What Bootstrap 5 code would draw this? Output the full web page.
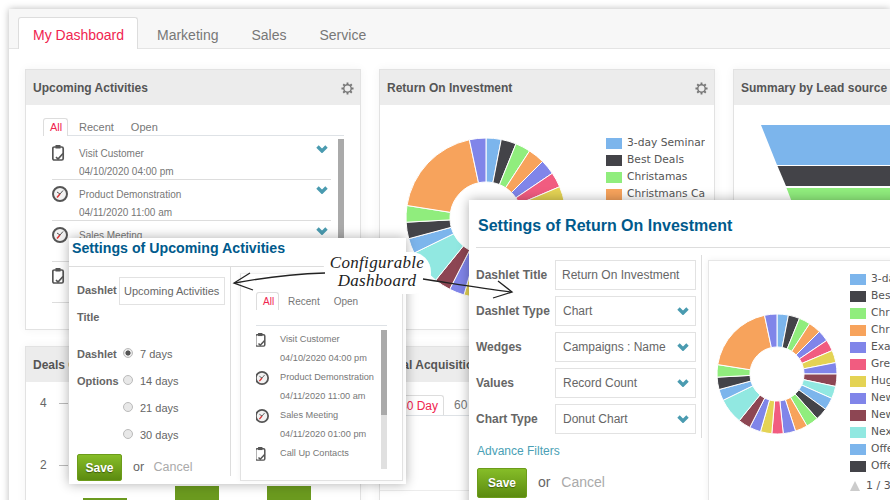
<!DOCTYPE html>
<html lang="en">
<head>
    <meta charset="UTF-8">
    <meta name="viewport" content="width=device-width, initial-scale=1.0">
    <title>Dashboard</title>
    <link href="https://cdn.jsdelivr.net/npm/bootstrap@5.3.1/dist/css/bootstrap.min.css" rel="stylesheet">
    <script src="https://cdn.jsdelivr.net/npm/bootstrap@5.3.1/dist/js/bootstrap.bundle.min.js"></script>
    <style>
        html, body { height: 500px; overflow: hidden; background: #fff; }
        body { position: relative; font-family: "Liberation Sans", Arial, sans-serif; color: #666; }

        .frame { margin: 9px 0 0 9px; height: 500px; overflow: hidden; background: #fff; box-shadow: 0 0 7px rgba(0,0,0,.28); }
        .top-tabs { height: 40px; padding: 8px 0 0 9px; background: #f7f7f7; border-bottom: 1px solid #e4e4e4; }
        .top-tabs .nav-link { height: 32px; padding: 0 19px 0 0; margin-left: 0; font-size: 14px; line-height: 36px; color: #777; border: 0; border-radius: 0; background: none; }
        .top-tabs .nav-link.active { width: 120px; padding: 0 0 0 14px; margin-right: 19px; color: #f0244f; background: #fff; border: 1px solid #ddd; border-bottom: 0; border-radius: 3px 3px 0 0; line-height: 35px; }
        .top-tabs .nav-item:nth-child(2) .nav-link { padding-right: 33px; }
        .top-tabs .nav-item:nth-child(3) .nav-link { padding-right: 33px; }

        .dash-grid { display: grid; grid-template-columns: repeat(3, 336px); grid-template-rows: 261px 300px; gap: 16px 18px; padding: 20px 0 0 16px; width: 1100px; }
        .dashlet { border: 1px solid #e2e2e2; border-radius: 0; box-shadow: 0 0 9px rgba(0,0,0,.05); overflow: hidden; }
        .dashlet .card-header { height: 35px; padding: 0 7px; font-size: 12px; font-weight: 700; line-height: 36px; color: #555; background: #ececec; border: 0; border-radius: 0; white-space: nowrap; }
        .dashlet .card-body { padding: 13px 16px 0 17px; }
        .gear { margin: 12px -1px 0 0; }

        .mini-tabs { font-size: 11px; }
        .mini-tabs .nav-link { padding: 0 0 0 11px; margin-right: 6px; line-height: 19px; color: #777; border: 0; background: none; }
        .mini-tabs .nav-link.active { width: 25px; padding: 0 0 0 6px; margin-right: 0; color: #f0244f; background: #fff; border: 1px solid #ddd; border-bottom: 0; border-radius: 3px 3px 0 0; line-height: 17px; height: 18px; }
        .act-tabs { height: 18px; }
        .act-wrap { height: 180px; margin-top: 3px; }
        .act-list { flex: 1; font-size: 10px; color: #777; margin: 0 7px 0 9px; }
        .act-item { position: relative; height: 41px; padding: 5px 0 0 27px; border-bottom: 1px solid #ddd; }
        .act-item .name { line-height: 19px; }
        .act-item .when { line-height: 15px; margin-top: 1px; }
        .act-icon { position: absolute; left: 0; top: 6px; width: 16px; height: 16px; }
        .act-chev { position: absolute; right: 3px; top: 6px; width: 12px; height: 8px; }
        .scroll-y { width: 6px; background: #e0e0e0; }
        .scroll-y div { background: #aaa; }

        .swatch { width: 16px; height: 11px; flex: none; }
        .legend { font-family: "DejaVu Sans", sans-serif; font-size: 10.7px; color: #555; white-space: nowrap; }
        .legend .row-l { display: flex; align-items: center; gap: 5px; height: 17px; }
        .pie-big { flex: none; margin: 28px 0 0 21px; }
        .legend-big { width: 99px; margin: 30px 0 0 35px; }
        .funnel-body { padding: 15px 0 0 0 !important; }
        .funnel { display: block; margin-left: 27px; }

        .axis { width: 42px; padding: 12px 0 0 14px; font-size: 12px; line-height: 18px; }
        .axis div { display: flex; height: 62px; }
        .axis span { width: 19px; }
        .axis i { display: block; width: 9px; height: 1px; margin-top: 9px; background: #bbb; }
        .bars { display: flex; align-items: flex-end; gap: 48px; height: 151px; margin-left: 15px; }
        .bars div { width: 44px; background: #6b9a1f; }
        .acq-body { padding: 13px 0 0 0 !important; }
        .acq-tabs { padding-left: 13px; font-size: 12px; }
        .acq-tabs .nav-link { line-height: 20px; padding-left: 10px; }
        .acq-tabs .nav-link.active { width: 51px; height: 20px; line-height: 20px; }
        .grid-line { margin: 74px 0 0 0; height: 1px; background: #ececec; }

        .settings { position: absolute; background: #fff; box-shadow: 0 0 11px rgba(0,0,0,.32); overflow: hidden; z-index: 5; }
        .settings h5 { font-weight: 700; color: #005a8c; margin: 0; white-space: nowrap; }
        .settings label { font-size: 12px; font-weight: 700; color: #666; }
        .settings .form-control, .settings .form-select { height: 30px; padding: 0 0 0 6px; font-size: 12px; color: #666; border: 1px solid #e2e2e2; border-radius: 0; box-shadow: none; }
        .settings .form-select { padding-left: 7px; background-size: 12px 8px; background-position: right 6px center;
            background-image: url("data:image/svg+xml,%3Csvg xmlns='http://www.w3.org/2000/svg' viewBox='0 0 12 8'%3E%3Cpath d='M1.500 1.500 6 6l4.500-4.500' fill='none' stroke='%234a9bb0' stroke-width='3.400'/%3E%3C/svg%3E"); }
        .btn-save { padding: 0; font-size: 12px; font-weight: 700; color: #fff; text-shadow: 0 1px 1px rgba(0,0,0,.4); background: linear-gradient(#86bd28, #5c8b10); border: 1px solid #6c9c1a; border-radius: 2px; }
        .or-cancel { font-size: 14px; color: #666; }
        .or-cancel a { color: #aaa; text-decoration: none; margin-left: 7px; }

        #win1 { left: 69px; top: 238px; width: 337px; height: 246px; }
        #win1 h5 { font-size: 14.2px; line-height: 20px; padding-left: 3px; }
        #win1 .head { height: 29px; border-bottom: 1px solid #ddd; }
        .w1-left { width: 153px; padding: 10px 0 0 8px; height: 199px; border-right: 1px solid #ddd; box-sizing: content-box; }
        .w1-grid { display: grid; grid-template-columns: 42px 106px; line-height: 27px; }
        .w1-grid label { font-size: 11px; line-height: 27px; }
        .w1-grid .form-control { height: 28px; font-size: 11px; padding-left: 4px; }
        .w1-spacer { grid-column: 1 / 3; height: 10px; }
        .w1-grid .opts { font-size: 11px; color: #666; padding-left: 4px; }
        .w1-grid .opts > div { display: flex; align-items: center; height: 27px; gap: 7px; }
        .form-check-input { width: 10px; height: 10px; margin: -3px 0 0 0; flex: none; background-color: #e8e8e8; border-color: #bbb; }
        .form-check-input:checked { background-color: #e8e8e8; border-color: #bbb; background-image: radial-gradient(circle, #555 0 2.3px, transparent 2.8px); }
        #win1 .btn-save { width: 45px; height: 27px; margin-top: 5px; }
        #win1 .or-cancel { margin: 5px 0 0 3px; font-size: 12.5px; }
        #win1 .or-cancel a { margin-left: 6px; }
        .w1-right { width: 163px; height: 208px; margin: 6px 0 0 9px; padding: 18px 15px 0 15px; border: 1px solid #e2e2e2; border-top-color: #f0f0f0; box-shadow: 0 0 6px rgba(0,0,0,.05); }
        .w1-tabs { padding-bottom: 14px; font-size: 10px; }
        .w1-tabs .nav-link { padding-left: 9px; margin-right: 5px; }
        .w1-tabs .nav-link.active { width: 23px; }
        .w1-wrap { height: 139px; margin-top: 4px; }
        .w1-list { flex: 1; height: 132px; font-size: 9.2px; color: #777; line-height: 19px; overflow: hidden; }
        .w1-item { position: relative; height: 38px; padding-left: 24px; }
        .w1-item .act-icon { top: 3px; left: -1px; width: 14px; height: 14px; }

        #win2 { left: 469px; top: 200px; width: 440px; height: 320px; }
        #win2 h5 { font-size: 16px; line-height: 20px; padding: 16px 0 11px 2px; margin-left: 7px; border-bottom: 1px solid #ddd; }
        .w2-left { width: 232px; padding: 12px 0 0 7px; }
        .w2-left .frow { display: grid; grid-template-columns: 79px 141px; align-items: center; margin-bottom: 6px; }
        .w2-left a.adv { display: block; margin: 9px 0 0 1px; font-size: 12px; line-height: 16px; color: #4a9fb5; text-decoration: none; }
        #win2 .btn-save { width: 50px; height: 30px; margin: 9px 0 0 1px; }
        #win2 .or-cancel { margin: 8px 0 0 3px; }
        .w2-rule { width: 1px; height: 183px; margin-top: 7px; background: #ddd; }
        .w2-right { position: relative; flex: 1; margin: 12px 0 0 6px; border: 1px solid #e6e6e6; height: 300px; box-shadow: 0 0 7px rgba(0,0,0,.06); }
        .w2-right svg.pie { position: absolute; left: 6px; top: 51px; }
        .w2-right .legend { position: absolute; left: 141px; top: 10px; }
        .pager { display: flex; align-items: center; gap: 6px; margin-top: 3px; font-size: 11px; color: #555; }
        .pager i { display: block; border: 5px solid transparent; border-top: 0; border-bottom: 10px solid #ccc; }

        .callout { position: absolute; left: 323px; top: 252px; width: 108px; height: 42px; padding-top: 2px; background: #fff; border-radius: 20px; z-index: 6; text-align: center; font-family: "Liberation Serif", serif; font-style: italic; font-size: 17px; line-height: 18px; letter-spacing: .3px; color: #222; }
        .arrows { position: absolute; left: 0; top: 0; z-index: 7; pointer-events: none; }
    </style>
</head>
<body>
<svg width="0" height="0" class="position-absolute">
    <symbol id="ic-task" viewBox="0 0 16 16">
        <rect x=".8" y="2" width="10.400" height="13" rx="1.500" fill="none" stroke="#555" stroke-width="1.700"/>
        <rect x="3.500" y="0" width="5" height="3.500" fill="#555"/>
        <path d="M4 12l2 2 5-5.500" fill="none" stroke="#555" stroke-width="1.700"/>
    </symbol>
    <symbol id="ic-meet" viewBox="0 0 16 16">
        <circle cx="8" cy="8" r="7" fill="#f2f2f2" stroke="#555" stroke-width="2"/>
        <path d="M5 11.500 8 8" stroke="#d33" stroke-width="1.500"/>
        <path d="M8 8 11 4.500M5 6l3 2" stroke="#555" stroke-width="1"/>
    </symbol>
    <symbol id="ic-chev" viewBox="0 0 12 8">
        <path d="M1.500 1.500 6 6l4.500-4.500" fill="none" stroke="#4a9bb0" stroke-width="3.400"/>
    </symbol>
    <symbol id="ic-gear" viewBox="0 0 14 14">
        <g stroke="#777" stroke-width="2">
            <path d="M7 .5v13M.5 7h13M2.400 2.400l9.200 9.200M11.600 2.400l-9.200 9.200"/>
        </g>
        <circle cx="7" cy="7" r="4" fill="#ececec" stroke="#777" stroke-width="1.500"/>
    </symbol>
</svg>

<div class="frame">
    <ul class="nav top-tabs">
        <li class="nav-item"><a class="nav-link active" href="#">My Dashboard</a></li>
        <li class="nav-item"><a class="nav-link" href="#">Marketing</a></li>
        <li class="nav-item"><a class="nav-link" href="#">Sales</a></li>
        <li class="nav-item"><a class="nav-link" href="#">Service</a></li>
    </ul>

    <div class="dash-grid">
        <div class="card dashlet">
            <div class="card-header d-flex justify-content-between">
                <span>Upcoming Activities</span>
                <svg width="13" height="13" class="gear"><use href="#ic-gear"/></svg>
            </div>
            <div class="card-body">
                <ul class="nav mini-tabs act-tabs border-bottom">
                    <li class="nav-item"><a class="nav-link active" href="#">All</a></li>
                    <li class="nav-item"><a class="nav-link" href="#">Recent</a></li>
                    <li class="nav-item"><a class="nav-link" href="#">Open</a></li>
                </ul>
                <div class="d-flex act-wrap">
                    <div class="act-list" id="actList"></div>
                    <div class="scroll-y"><div class="h-100"></div></div>
                </div>
            </div>
        </div>

        <div class="card dashlet">
            <div class="card-header d-flex justify-content-between">
                <span>Return On Investment</span>
                <svg width="13" height="13" class="gear"><use href="#ic-gear"/></svg>
            </div>
            <div class="card-body d-flex p-0">
                <svg class="pie pie-big" width="170" height="170"></svg>
                <div class="legend legend-big overflow-hidden" id="legend1"></div>
            </div>
        </div>

        <div class="card dashlet">
            <div class="card-header">Summary by Lead source</div>
            <div class="card-body funnel-body">
                <svg class="funnel" width="309" height="90" viewBox="0 0 309 90">
                    <polygon points="0,5 309,5 309,45 16,45" fill="#7cb5ec"/>
                    <polygon points="16.500,46 309,46 309,66 25,66" fill="#434348"/>
                    <polygon points="25.500,68 309,68 309,90 34,90" fill="#90ed7d"/>
                </svg>
            </div>
        </div>

        <div class="card dashlet">
            <div class="card-header">Deals Closed</div>
            <div class="card-body p-0 d-flex">
                <div class="axis">
                    <div><span>4</span><i></i></div>
                    <div><span>2</span><i></i></div>
                </div>
                <div class="bars" id="bars"></div>
            </div>
        </div>

        <div class="card dashlet">
            <div class="card-header">Deal Acquisition</div>
            <div class="card-body acq-body">
                <ul class="nav mini-tabs acq-tabs border-bottom">
                    <li class="nav-item"><a class="nav-link active" href="#">30 Day</a></li>
                    <li class="nav-item"><a class="nav-link" href="#">60 Day</a></li>
                </ul>
                <div class="grid-line"></div>
            </div>
        </div>

        <div class="card dashlet">
            <div class="card-header">Top Campaigns</div>
        </div>
    </div>
</div>

<div class="settings" id="win1">
    <div class="head"><h5>Settings of Upcoming Activities</h5></div>
    <div class="d-flex">
        <div class="w1-left">
            <div class="w1-grid">
                <label>Dashlet Title</label>
                <input class="form-control" value="Upcoming Activities">
                <div class="w1-spacer"></div>
                <label>Dashlet Options</label>
                <div class="opts">
                    <div><input class="form-check-input" type="radio" name="days" checked> 7 days</div>
                    <div><input class="form-check-input" type="radio" name="days"> 14 days</div>
                    <div><input class="form-check-input" type="radio" name="days"> 21 days</div>
                    <div><input class="form-check-input" type="radio" name="days"> 30 days</div>
                </div>
            </div>
            <div class="d-flex align-items-center gap-2">
                <button class="btn btn-save">Save</button>
                <span class="or-cancel">or <a href="#">Cancel</a></span>
            </div>
        </div>
        <div class="w1-right">
            <ul class="nav mini-tabs w1-tabs border-bottom">
                <li class="nav-item"><a class="nav-link active" href="#">All</a></li>
                <li class="nav-item"><a class="nav-link" href="#">Recent</a></li>
                <li class="nav-item"><a class="nav-link" href="#">Open</a></li>
            </ul>
            <div class="d-flex w1-wrap">
                <div class="w1-list" id="winList"></div>
                <div class="scroll-y"><div style="height:61%"></div></div>
            </div>
        </div>
    </div>
</div>

<div class="settings" id="win2">
    <h5>Settings of Return On Investment</h5>
    <div class="d-flex">
        <div class="w2-left">
            <div class="frow"><label>Dashlet Title</label><input class="form-control" value="Return On Investment"></div>
            <div class="frow"><label>Dashlet Type</label><select class="form-select"><option>Chart</option></select></div>
            <div class="frow"><label>Wedges</label><select class="form-select"><option>Campaigns : Name</option></select></div>
            <div class="frow"><label>Values</label><select class="form-select"><option>Record Count</option></select></div>
            <div class="frow"><label>Chart Type</label><select class="form-select"><option>Donut Chart</option></select></div>
            <a class="adv" href="#">Advance Filters</a>
            <div class="d-flex align-items-center gap-2">
                <button class="btn btn-save">Save</button>
                <span class="or-cancel">or <a href="#">Cancel</a></span>
            </div>
        </div>
        <div class="w2-rule"></div>
        <div class="w2-right">
            <svg class="pie" width="124" height="124"></svg>
            <div class="legend" id="legend2"></div>
        </div>
    </div>
</div>

<div class="callout">Configurable<br>Dashboard</div>
<svg class="arrows" width="890" height="500" fill="none" stroke="#222" stroke-width="1.300">
    <path d="M325 273C295 274 262 278 235 283"/>
    <path d="M250 273 234 283 253 290"/>
    <path d="M423 279C450 283 480 288 511 292"/>
    <path d="M498 281 512 292 493 298"/>
</svg>

<script>
    const colors = ['#7cb5ec', '#434348', '#90ed7d', '#f7a35c', '#8085e9', '#f15c80', '#e4d354', '#8085e9', '#8d4653', '#91e8e1'];

    // clockwise from 12 o'clock, in degrees
    const slices = [11, 11, 11, 12, 11, 11, 12, 11, 12, 12, 12, 12, 12, 12, 12, 11, 11, 11, 12, 25, 11, 12, 12, 69, 12];

    function drawDonut(svg, outer, inner) {
        const cx = svg.getAttribute('width') / 2;
        const cy = svg.getAttribute('height') / 2;
        const point = (r, a) => {
            const rad = (a - 90) * Math.PI / 180;
            return (cx + r * Math.cos(rad)).toFixed(2) + ' ' + (cy + r * Math.sin(rad)).toFixed(2);
        };
        const total = slices.reduce((a, b) => a + b, 0);
        let angle = 0;
        let html = '';
        slices.forEach((size, i) => {
            const next = angle + size * 360 / total;
            const large = next - angle > 180 ? 1 : 0;
            html += `<path d="M${point(outer, angle)}A${outer} ${outer} 0 ${large} 1 ${point(outer, next)}L${point(inner, next)}A${inner} ${inner} 0 ${large} 0 ${point(inner, angle)}Z" fill="${colors[i % colors.length]}" stroke="#fff"/>`;
            angle = next;
        });
        svg.innerHTML = html;
    }

    document.querySelectorAll('.dashlet svg.pie').forEach(svg => drawDonut(svg, 80, 36));
    document.querySelectorAll('.w2-right svg.pie').forEach(svg => drawDonut(svg, 60, 27));

    const legendNames = ['3-day Seminar', 'Best Deals', 'Christamas', 'Christmans Campaign', 'Example', 'Great Offer', 'Huge Sale', 'New Year', 'New Product', 'Next Gen', 'Offer A', 'Offer B'];
    const legendHtml = legendNames.map((name, i) =>
        `<div class="row-l"><span class="swatch" style="background:${colors[i % colors.length]}"></span>${name}</div>`).join('');
    document.getElementById('legend1').innerHTML = legendHtml;
    document.getElementById('legend2').innerHTML = legendHtml + '<div class="pager"><i></i>1 / 3</div>';

    const activities = [
        ['task', 'Visit Customer', '04/10/2020 04:00 pm'],
        ['meet', 'Product Demonstration', '04/11/2020 11:00 am'],
        ['meet', 'Sales Meeting', '04/11/2020 01:00 pm'],
        ['task', 'Call Up Contacts', '04/12/2020 09:00 am']
    ];
    document.getElementById('actList').innerHTML = activities.map(a => `
        <div class="act-item">
            <svg class="act-icon"><use href="#ic-${a[0]}"/></svg>
            <svg class="act-chev"><use href="#ic-chev"/></svg>
            <div class="name">${a[1]}</div>
            <div class="when">${a[2]}</div>
        </div>`).join('');
    document.getElementById('winList').innerHTML = activities.map(a => `
        <div class="w1-item">
            <svg class="act-icon"><use href="#ic-${a[0]}"/></svg>
            <div>${a[1]}</div>
            <div>${a[2]}</div>
        </div>`).join('');

    document.getElementById('bars').innerHTML = [35, 47, 47].map(h => `<div style="height:${h}px"></div>`).join('');
</script>
</body>
</html>
